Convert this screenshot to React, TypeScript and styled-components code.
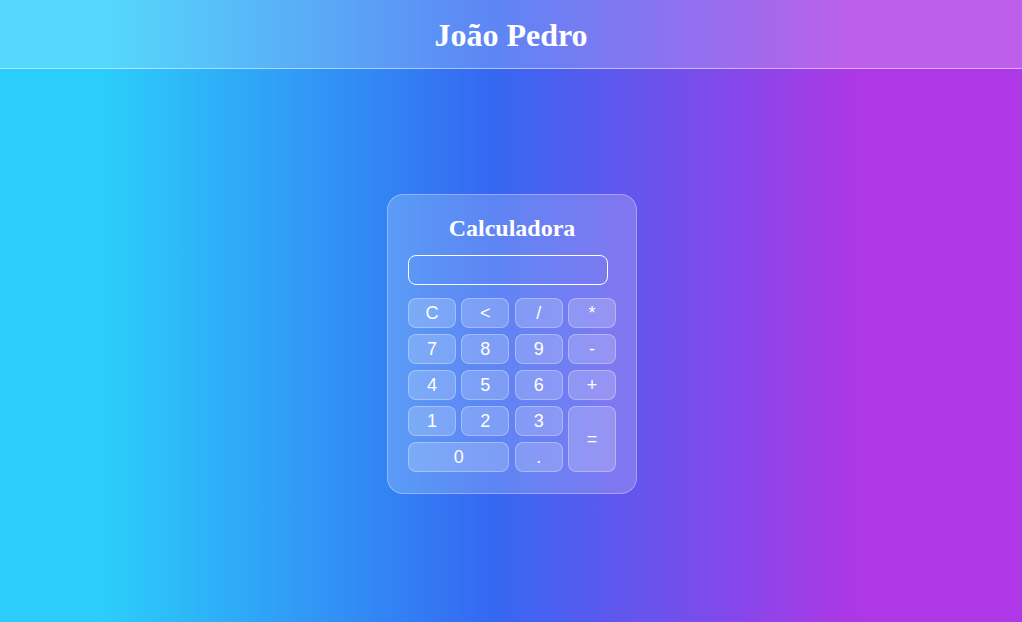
import React, { useState } from "react";
import styled, { createGlobalStyle } from "styled-components";

const GlobalStyle = createGlobalStyle`
  html, body {
    margin: 0;
    padding: 0;
    height: 100%;
  }
  #root {
    min-height: 100vh;
  }
`;

const Page = styled.div`
  min-height: 100vh;
  display: flex;
  flex-direction: column;
  background: linear-gradient(90deg, #2bcefa 10%, #3568f2 48%, #ae37e6 84%);
  font-family: "Liberation Serif", "Times New Roman", serif;
`;

const Header = styled.header`
  box-sizing: border-box;
  height: 69px;
  padding-top: 3px;
  display: flex;
  align-items: center;
  justify-content: center;
  background: rgba(255, 255, 255, 0.2);
  border-bottom: 1px solid rgba(255, 255, 255, 0.5);
`;

const Name = styled.h1`
  margin: 0;
  color: #fff;
  font-size: 32px;
  font-weight: bold;
`;

const Main = styled.main`
  flex: 1;
  display: flex;
  justify-content: center;
  align-items: flex-start;
  padding: 125px 0 0 2px;
`;

const Card = styled.div`
  width: 208px;
  padding: 20px 20px 21px;
  background: rgba(255, 255, 255, 0.2);
  border: 1px solid rgba(255, 255, 255, 0.3);
  border-radius: 16px;
  display: flex;
  flex-direction: column;
`;

const Title = styled.h2`
  margin: 0 0 14px;
  color: #fff;
  font-size: 24px;
  font-weight: bold;
  text-align: center;
  line-height: 26px;
`;

const Display = styled.input`
  box-sizing: border-box;
  flex-shrink: 0;
  width: 200px;
  height: 30px;
  margin-bottom: 13px;
  background: transparent;
  border: 1px solid #fff;
  border-radius: 8px;
  color: #fff;
  font-family: "Liberation Sans", Arial, sans-serif;
  font-size: 16px;
  padding: 0 8px;
  outline: none;
`;

const Keys = styled.div`
  display: grid;
  grid-template-columns: repeat(4, 48px);
  grid-auto-rows: 30px;
  column-gap: 5.33px;
  row-gap: 6px;
`;

const Key = styled.button<{ $wide?: boolean; $tall?: boolean }>`
  grid-column: ${(p) => (p.$wide ? "span 2" : "auto")};
  grid-row: ${(p) => (p.$tall ? "span 2" : "auto")};
  background: rgba(255, 255, 255, 0.2);
  border: 1px solid rgba(255, 255, 255, 0.3);
  border-radius: 8px;
  color: #fff;
  font-family: "Liberation Sans", Arial, sans-serif;
  font-size: 18px;
  padding: 0;
  cursor: pointer;
`;

const keys: { label: string; wide?: boolean; tall?: boolean }[] = [
  { label: "C" },
  { label: "<" },
  { label: "/" },
  { label: "*" },
  { label: "7" },
  { label: "8" },
  { label: "9" },
  { label: "-" },
  { label: "4" },
  { label: "5" },
  { label: "6" },
  { label: "+" },
  { label: "1" },
  { label: "2" },
  { label: "3" },
  { label: "=", tall: true },
  { label: "0", wide: true },
  { label: "." },
];

const App = () => {
  const [value, setValue] = useState("");

  const handleKey = (label: string) => {
    if (label === "C") return setValue("");
    if (label === "<") return setValue((v) => v.slice(0, -1));
    if (label === "=") {
      try {
        // eslint-disable-next-line no-new-func
        setValue(String(Function(`return (${value})`)()));
      } catch {
        setValue("Erro");
      }
      return;
    }
    setValue((v) => v + label);
  };

  return (
    <Page>
      <GlobalStyle />
      <Header>
        <Name>João Pedro</Name>
      </Header>
      <Main>
        <Card>
          <Title>Calculadora</Title>
          <Display value={value} readOnly />
          <Keys>
            {keys.map((k) => (
              <Key
                key={k.label}
                $wide={k.wide}
                $tall={k.tall}
                onClick={() => handleKey(k.label)}
              >
                {k.label}
              </Key>
            ))}
          </Keys>
        </Card>
      </Main>
    </Page>
  );
};

export default App;
